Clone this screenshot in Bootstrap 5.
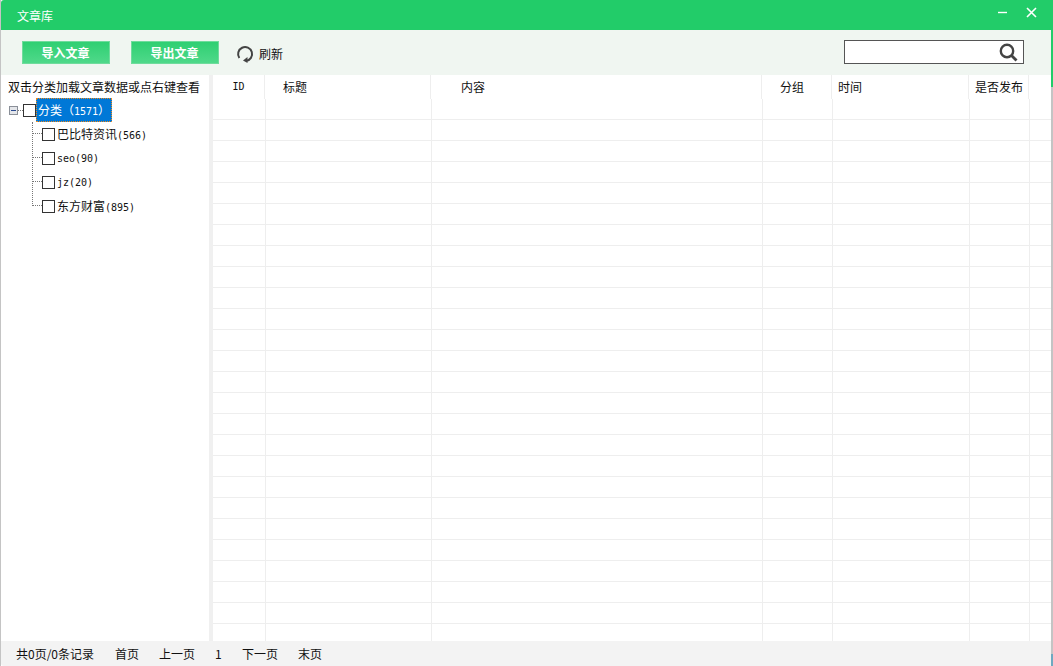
<!DOCTYPE html>
<html lang="zh-CN">
<head>
  <meta charset="UTF-8">
  <title>文章库</title>
  <link href="https://cdn.jsdelivr.net/npm/bootstrap@5.3.3/dist/css/bootstrap.min.css" rel="stylesheet">
  <style>
    html, body { height: 100%; }
    body {
      background: #fff;
      color: #111;
      font-family: "Noto Sans CJK SC", "Liberation Sans", sans-serif;
      font-size: 12px;
      overflow: hidden;
    }
    .app-frame { width: 1053px; height: 666px; }
    .app-window {
      flex: 1;
      min-width: 0;
      border-left: 1px solid #c4c4c4;
    }
    .edge-strip {
      width: 2px;
      flex: none;
      background: linear-gradient(#22cc69 0 87px, #c4c4c4 87px 654px, #6fa8c0 654px);
    }
    .title-bar {
      height: 30px;
      background: #22cc69;
      color: #fff;
      padding-left: 16px;
      padding-right: 13px;
      border-top-left-radius: 3px;
    }
    .title-text { padding-top: 2px; }
    .win-btns { margin-bottom: 5px; }
    .win-btn { width: 13px; height: 13px; display: block; }
    .tool-bar {
      height: 45px;
      background: #f0f6f1;
      padding-left: 21px;
      padding-right: 27px;
      padding-bottom: 1px;
    }
    .btn-green {
      width: 88px;
      height: 23px;
      margin-top: 1px;
      padding: 0 1px 0 0;
      border: 1px solid #6fdc9c;
      border-radius: 0;
      background: linear-gradient(#2fcf72, #4fd98a);
      color: #fff;
      font-size: 12px;
      font-weight: 700;
      line-height: 19px;
    }
    .btn-gap { margin-left: 21px; }
    .refresh-icon { margin-left: 17px; margin-top: 3px; }
    .refresh-text { margin-left: 5px; margin-top: 3px; }
    .search-box {
      width: 180px;
      height: 24px;
      background: #fff;
      border: 1px solid #555;
      padding-right: 5px;
    }
    .main-area { height: 566px; }
    .side-panel { width: 208px; flex: none; }
    .side-hint { height: 23px; line-height: 24px; padding-left: 7px; white-space: nowrap; }
    .split-bar { width: 4px; flex: none; background: #f0f0f0; }
    .tree-box { position: relative; padding-left: 8px; }
    .tree-row { height: 24px; white-space: nowrap; }
    .tree-child { position: relative; padding-left: 33px; }
    .tree-child::before {
      content: "";
      position: absolute;
      left: 24px;
      top: 11px;
      width: 9px;
      border-top: 1px dotted #777;
    }
    .tree-stem {
      position: absolute;
      left: 31px;
      top: 24px;
      height: 84px;
      border-left: 1px dotted #777;
    }
    .tree-toggle {
      width: 9px;
      height: 9px;
      border: 1px solid #8a8f98;
      background: #e4e6ea;
      position: relative;
      flex: none;
    }
    .tree-toggle::after {
      content: "";
      position: absolute;
      left: 1px;
      top: 3px;
      width: 5px;
      height: 1px;
      background: #2a4a90;
    }
    .tree-dots { width: 5px; border-top: 1px dotted #777; flex: none; }
    .tree-check {
      width: 13px;
      height: 13px;
      border: 1px solid #333;
      background: #fff;
      flex: none;
    }
    .tree-root-label {
      background: #0078d7;
      color: #fff;
      outline: 1px dotted #f08a1c;
      outline-offset: -1px;
      height: 24px;
      width: 76px;
      line-height: 24px;
      padding-left: 2px;
    }
    .tree-label { margin-left: 2px; }
    .mono-text {
      font-family: "DejaVu Sans Mono", "Liberation Mono", monospace;
      font-size: 10px;
    }
    .grid-pane { flex: 1; min-width: 0; overflow: hidden; }
    .grid-head { height: 24px; }
    .grid-head > div {
      height: 24px;
      line-height: 24px;
      border-right: 1px solid #eee;
      flex: none;
      white-space: nowrap;
    }
    .data-grid {
      table-layout: fixed;
      width: 838px;
      border-collapse: separate;
      border-spacing: 0;
      margin: 0;
    }
    .data-grid td {
      height: 21px;
      padding: 0;
      border-right: 1px solid #eee;
      border-bottom: 1px solid #eee;
    }
    .data-grid td:last-child { border-right: 0; }
    .col-w1 { width: 52px; }
    .col-w1b { width: 53px; }
    .col-w2 { width: 166px; }
    .col-w3 { width: 331px; }
    .col-w4 { width: 70px; }
    .col-w5 { width: 137px; }
    .col-w6 { width: 60px; }
    .col-w7 { width: 21px; }
    .head-title { padding-left: 18px; }
    .head-body { padding-left: 30px; }
    .head-group { padding-left: 18px; }
    .head-narrow { padding-left: 6px; }
    .status-bar {
      height: 25px;
      background: #f3f3f3;
      padding-left: 15px;
      gap: 20px;
      border-bottom-left-radius: 3px;
    }
    .status-total { min-width: 79px; }
    .status-num { min-width: 7px; }
  </style>
</head>
<body>
  <div class="app-frame d-flex">
    <div class="app-window d-flex flex-column">
      <div class="title-bar d-flex align-items-center justify-content-between">
        <span class="title-text">文章库</span>
        <div class="win-btns d-flex align-items-center gap-3">
          <svg class="win-btn" viewBox="0 0 13 13"><path d="M2 6.5h9" stroke="#fff" stroke-width="1.4"/></svg>
          <svg class="win-btn" viewBox="0 0 13 13"><path d="M2 2l9 9M11 2l-9 9" stroke="#fff" stroke-width="1.6"/></svg>
        </div>
      </div>

      <div class="tool-bar d-flex align-items-center">
        <button type="button" class="btn btn-green">导入文章</button>
        <button type="button" class="btn btn-green btn-gap">导出文章</button>
        <svg class="refresh-icon" width="18" height="18" viewBox="0 0 18 18"><path d="M3.3 13A7 7 0 1 1 10 16" fill="none" stroke="#444" stroke-width="2"/><path d="M11.5 12v6L7 15.5z" fill="#444"/></svg>
        <span class="refresh-text">刷新</span>
        <div class="search-box ms-auto d-flex align-items-center justify-content-end">
          <svg width="19" height="19" viewBox="0 0 19 19"><circle cx="8" cy="8" r="6.2" fill="none" stroke="#444" stroke-width="2.4"/><path d="M12.5 12.5l5 5" stroke="#444" stroke-width="2.8"/></svg>
        </div>
      </div>

      <div class="main-area d-flex">
        <div class="side-panel">
          <div class="side-hint">双击分类加载文章数据或点右键查看</div>
          <div class="tree-box">
            <div class="tree-stem"></div>
            <div class="tree-row d-flex align-items-center">
              <span class="tree-toggle"></span>
              <span class="tree-dots"></span>
              <span class="tree-check"></span>
              <span class="tree-root-label">分类（<span class="mono-text">1571</span>）</span>
            </div>
            <div class="tree-row tree-child d-flex align-items-center"><span class="tree-check"></span><span class="tree-label">巴比特资讯<span class="mono-text">(566)</span></span></div>
            <div class="tree-row tree-child d-flex align-items-center"><span class="tree-check"></span><span class="tree-label mono-text">seo(90)</span></div>
            <div class="tree-row tree-child d-flex align-items-center"><span class="tree-check"></span><span class="tree-label mono-text">jz(20)</span></div>
            <div class="tree-row tree-child d-flex align-items-center"><span class="tree-check"></span><span class="tree-label">东方财富<span class="mono-text">(895)</span></span></div>
          </div>
        </div>
        <div class="split-bar"></div>
        <div class="grid-pane">
          <div class="grid-head d-flex">
            <div class="col-w1 mono-text text-center">ID</div>
            <div class="col-w2 head-title">标题</div>
            <div class="col-w3 head-body">内容</div>
            <div class="col-w4 head-group">分组</div>
            <div class="col-w5 head-narrow">时间</div>
            <div class="col-w6 head-narrow">是否发布</div>
          </div>
          <table class="data-grid">
            <colgroup><col class="col-w1b"><col class="col-w2"><col class="col-w3"><col class="col-w4"><col class="col-w5"><col class="col-w6"><col class="col-w7"></colgroup>
            <tbody id="gridBody"></tbody>
          </table>
        </div>
      </div>

      <div class="status-bar d-flex align-items-center">
        <span class="status-total">共0页/0条记录</span>
        <span>首页</span>
        <span>上一页</span>
        <span class="status-num">1</span>
        <span>下一页</span>
        <span>末页</span>
      </div>
    </div>
    <div class="edge-strip"></div>
  </div>

  <script src="https://cdn.jsdelivr.net/npm/bootstrap@5.3.3/dist/js/bootstrap.bundle.min.js"></script>
  <script>
    const gridBody = document.getElementById('gridBody');
    for (let i = 0; i < 26; i++) {
      const row = document.createElement('tr');
      row.innerHTML = '<td></td><td></td><td></td><td></td><td></td><td></td><td></td>';
      gridBody.appendChild(row);
    }
  </script>
</body>
</html>
